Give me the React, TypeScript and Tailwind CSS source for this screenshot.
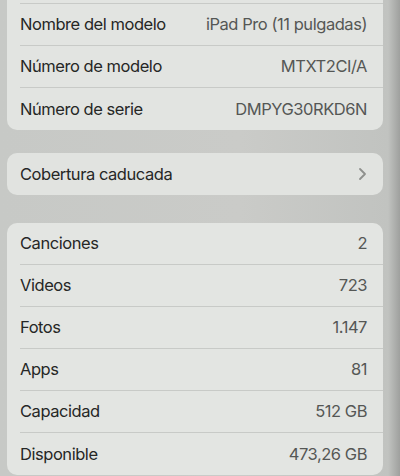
import React from "react";

type Row = { label: string; value?: string; chevron?: boolean };

const device: Row[] = [
  { label: "Nombre del modelo", value: "iPad Pro (11 pulgadas)" },
  { label: "Número de modelo", value: "MTXT2CI/A" },
  { label: "Número de serie", value: "DMPYG30RKD6N" },
];

const media: Row[] = [
  { label: "Canciones", value: "2" },
  { label: "Videos", value: "723" },
  { label: "Fotos", value: "1.147" },
  { label: "Apps", value: "81" },
  { label: "Capacidad", value: "512 GB" },
  { label: "Disponible", value: "473,26 GB" },
];

const Chevron = () => (
  <svg width="9" height="14" viewBox="0 0 9 14" fill="none" className="text-[#8e908d]">
    <path d="M2 2 L7 7 L2 12" stroke="currentColor" strokeWidth="1.8" strokeLinecap="round" strokeLinejoin="round" />
  </svg>
);

const ListRow = ({ row, last }: { row: Row; last: boolean }) => (
  <div className="pl-[13px]">
    <div
      className={`flex h-[42px] items-center justify-between pr-[16px] ${
        last ? "" : "border-b border-[#c8cac7]"
      }`}
    >
      <span className="text-[#262726]">{row.label}</span>
      {row.chevron ? (
        <Chevron />
      ) : (
        <span className="text-[#555755]">{row.value}</span>
      )}
    </div>
  </div>
);

export default function App() {
  return (
    <div
      className="h-[476px] w-[400px] overflow-hidden bg-[linear-gradient(to_right,#c7c9c6_0%,#cacbc8_60%,#c1c3c0_97%,#9fa09e_100%)] text-[16.5px] tracking-[-0.45px]"
      style={{ fontFamily: "Inter, 'Noto Sans', sans-serif" }}
    >
      {/* device info, clipped at the top */}
      <div className="ml-[7px] w-[376px] rounded-b-[10px] bg-[#e2e4e1]">
        <div className="pl-[13px]">
          <div className="h-[4px] border-b border-[#c8cac7]" />
        </div>
        {device.map((r, i) => (
          <ListRow key={r.label} row={r} last={i === device.length - 1} />
        ))}
      </div>

      <div className="ml-[7px] mt-[23px] w-[376px] rounded-[10px] bg-[#e1e3e0]">
        <ListRow row={{ label: "Cobertura caducada", chevron: true }} last />
      </div>

      <div className="ml-[7px] mt-[28px] w-[376px] rounded-[10px] bg-[#e3e5e2]">
        {media.map((r, i) => (
          <ListRow key={r.label} row={r} last={i === media.length - 1} />
        ))}
      </div>
    </div>
  );
}
